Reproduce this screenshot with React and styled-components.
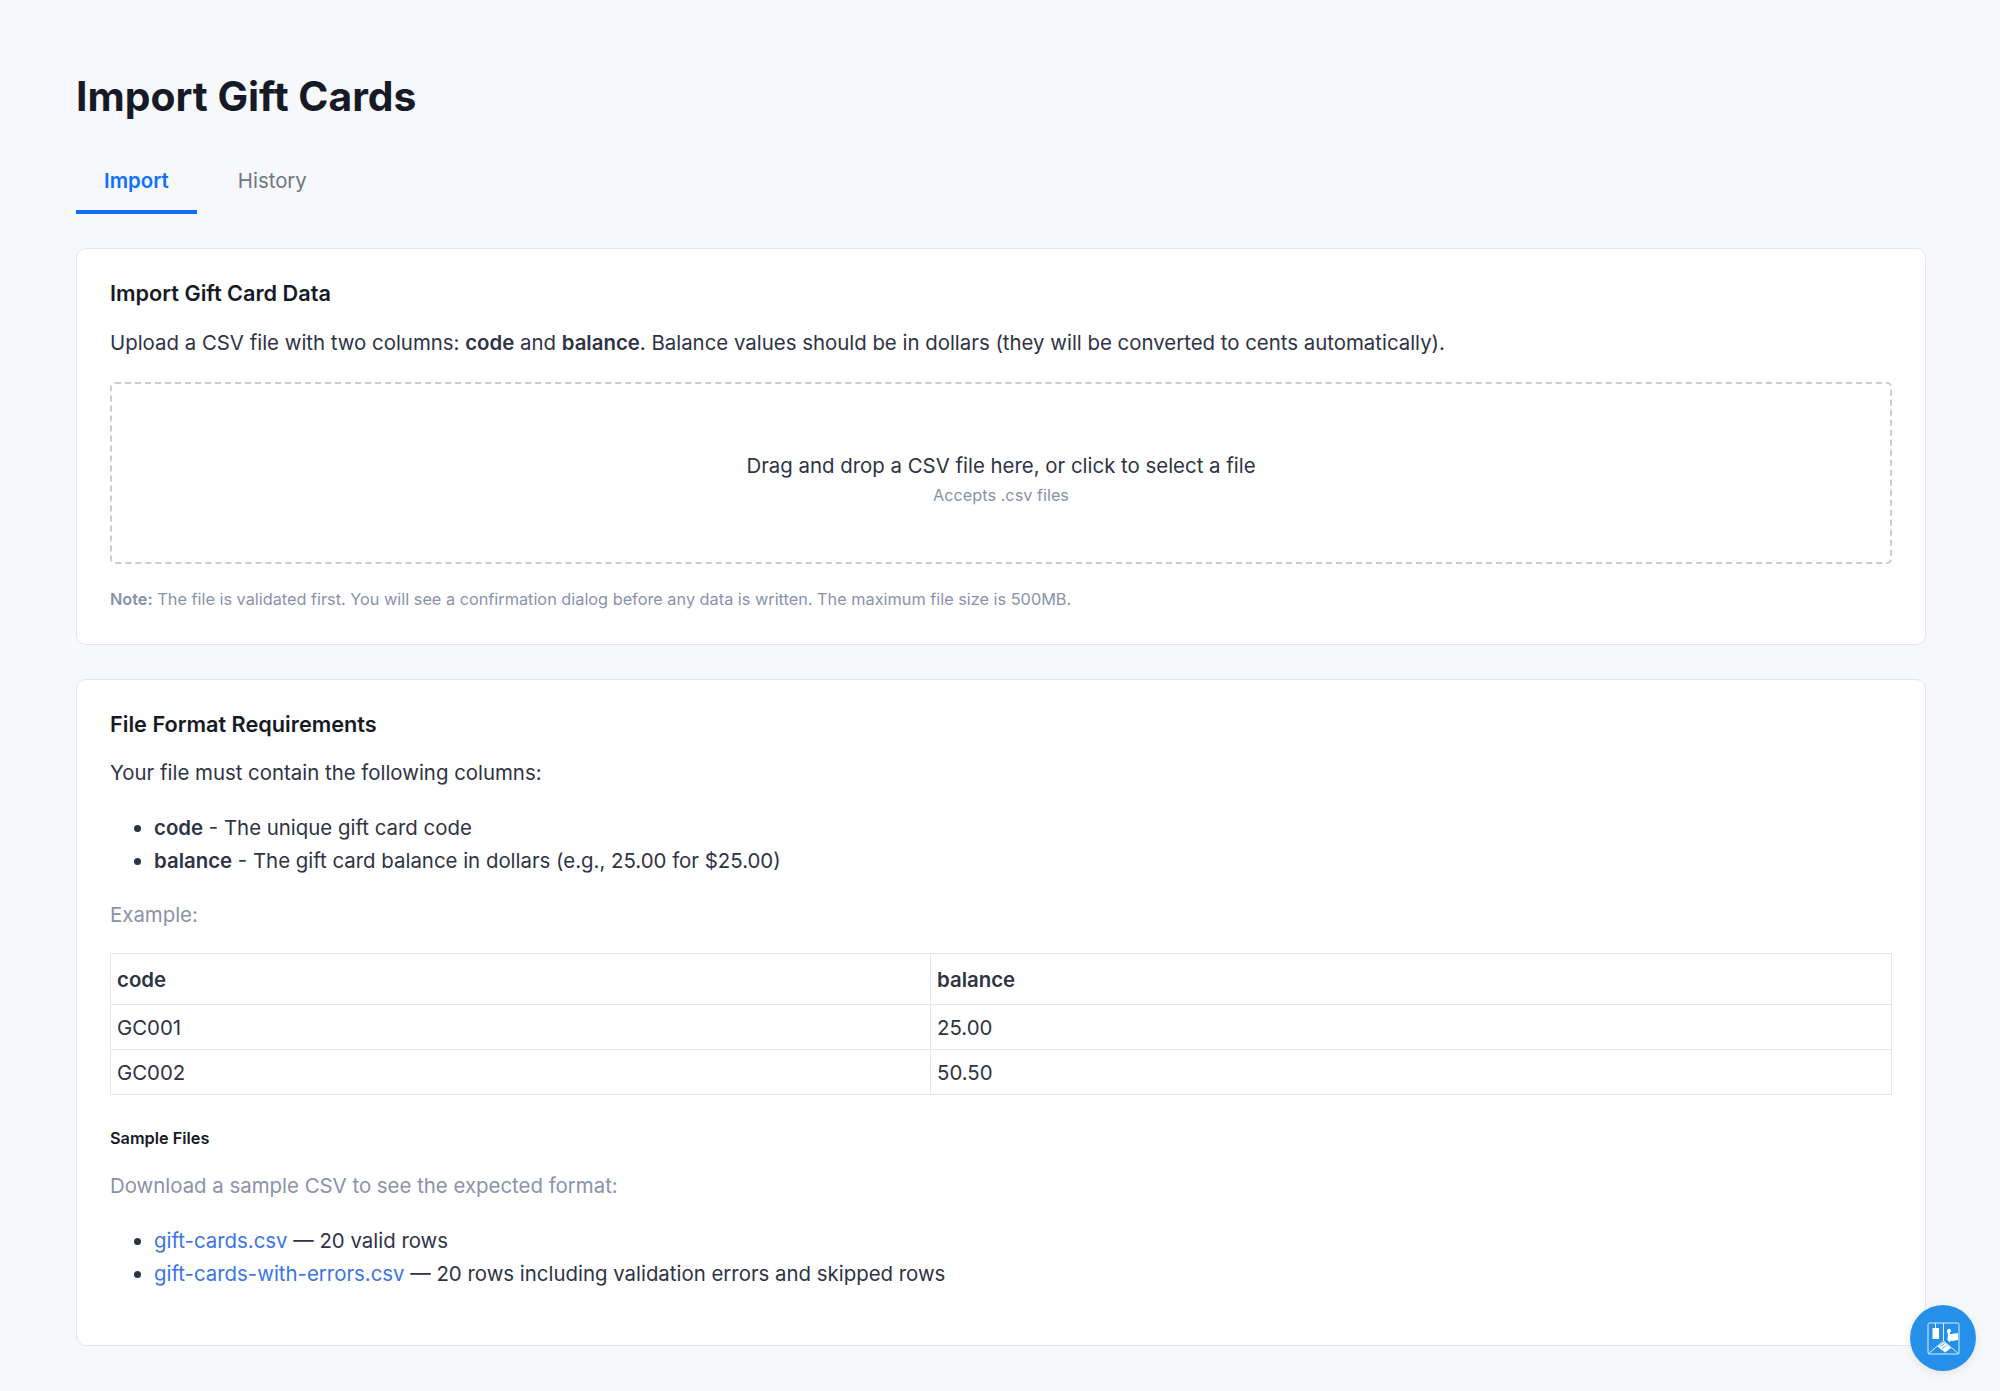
import React from 'react';
import styled, { createGlobalStyle } from 'styled-components';

const GlobalStyle = createGlobalStyle`
  html, body {
    margin: 0;
    padding: 0;
    background: #f6f8fb;
  }
  body {
    font-family: Inter, "Liberation Sans", sans-serif;
    color: #2e3345;
  }
`;

const App = () => {
  return (
    <Page>
      <GlobalStyle />
      <Title>Import Gift Cards</Title>
      <Tabs>
        <Tab $active>Import</Tab>
        <Tab>History</Tab>
      </Tabs>

      <Card>
        <CardTitle>Import Gift Card Data</CardTitle>
        <Text $mt={21}>
          Upload a CSV file with two columns: <b>code</b> and <b>balance</b>. Balance values should be in dollars (they will be converted to cents automatically).
        </Text>
        <DropZone>
          <DropText>Drag and drop a CSV file here, or click to select a file</DropText>
          <DropHint>Accepts .csv files</DropHint>
        </DropZone>
        <Note><b>Note:</b> The file is validated first. You will see a confirmation dialog before any data is written. The maximum file size is 500MB.</Note>
      </Card>

      <Card $last>
        <CardTitle>File Format Requirements</CardTitle>
        <Text $mt={20}>Your file must contain the following columns:</Text>
        <List>
          <li><b>code</b> - The unique gift card code</li>
          <li><b>balance</b> - The gift card balance in dollars (e.g., 25.00 for $25.00)</li>
        </List>
        <Text $mt={23} $muted>Example:</Text>
        <Table>
          <colgroup>
            <col width="820" />
            <col />
          </colgroup>
          <thead>
            <HeadRow>
              <th>code</th>
              <th>balance</th>
            </HeadRow>
          </thead>
          <tbody>
            <BodyRow>
              <td>GC001</td>
              <td>25.00</td>
            </BodyRow>
            <BodyRow>
              <td>GC002</td>
              <td>50.50</td>
            </BodyRow>
          </tbody>
        </Table>
        <SubTitle>Sample Files</SubTitle>
        <Text $mt={21} $muted>Download a sample CSV to see the expected format:</Text>
        <List>
          <li><FileLink href="#">gift-cards.csv</FileLink> — 20 valid rows</li>
          <li><FileLink href="#">gift-cards-with-errors.csv</FileLink> — 20 rows including validation errors and skipped rows</li>
        </List>
      </Card>

      <HelpButton aria-label="Help">
        <svg width="33" height="33" viewBox="0 0 33 33" fill="none">
          <rect x="1" y="1" width="31" height="31" rx="1.5" stroke="#fff" strokeOpacity="0.85" strokeWidth="1" />
          <path d="M1 32 L16.5 19 L32 32 M16.5 19 V1" stroke="#fff" strokeOpacity="0.85" strokeWidth="1" />
          <path d="M8.5 1.5 V6" stroke="#fff" strokeWidth="1" />
          <rect x="5.5" y="6" width="6.5" height="11" fill="#fff" />
          <path d="M20 9 a2 2 0 1 1 3 1.6 L22.6 12 H24 L31 11 V18 L25 19 L24 18.5 L22.5 20 L20.5 18 L21 13 Z" fill="#fff" />
          <path d="M10.5 24.5 L17 20 L24 26 L18 30.5 Z" fill="#fff" />
          <path d="M13 24.5 L17.5 21.5 M15 26.5 L19.5 23.5" stroke="#2590ea" strokeWidth="0.7" />
        </svg>
      </HelpButton>
    </Page>
  );
};

export default App;

const Page = styled.div`
  box-sizing: border-box;
  min-height: 1391px;
  padding: 72px 74px 0 76px;
`;

const Title = styled.h1`
  margin: 0;
  font-size: 40.8px;
  line-height: 48px;
  font-weight: 700;
  color: #161a26;
`;

const Tabs = styled.div`
  display: flex;
  gap: 13px;
  margin-top: 32px;
`;

const Tab = styled.div`
  padding: 0 28px;
  height: 58px;
  line-height: 58px;
  font-size: 20.4px;
  font-weight: ${p => (p.$active ? 600 : 400)};
  color: ${p => (p.$active ? '#0f6fff' : '#6f7683')};
  border-bottom: 4px solid ${p => (p.$active ? '#0f6fff' : 'transparent')};
`;

const Card = styled.section`
  box-sizing: border-box;
  margin-top: ${p => (p.$last ? 34 : 34)}px;
  padding: 30px 33px ${p => (p.$last ? 55 : 33)}px;
  background: #fff;
  border: 1px solid #e3e6ee;
  border-radius: 10px;
`;

const CardTitle = styled.h2`
  margin: 0;
  font-size: 21.7px;
  line-height: 28px;
  font-weight: 600;
  color: #161a26;
`;

const Text = styled.p`
  margin: ${p => p.$mt}px 0 0;
  font-size: 20.4px;
  line-height: 30px;
  color: ${p => (p.$muted ? '#8a92ab' : '#2e3345')};

  b {
    font-weight: 600;
  }
`;

const DropZone = styled.div`
  box-sizing: border-box;
  height: 182px;
  margin-top: 24px;
  padding-top: 67px;
  border: 2.5px dashed #cccccc;
  border-radius: 5px;
  text-align: center;
`;

const DropText = styled.div`
  font-size: 20.4px;
  line-height: 30px;
  color: #2e3345;
`;

const DropHint = styled.div`
  font-size: 16.3px;
  line-height: 24px;
  margin-top: 2px;
  color: #8a92ab;
`;

const Note = styled.p`
  margin: 23px 0 0;
  font-size: 16.3px;
  line-height: 24px;
  color: #8a92ab;

  b {
    font-weight: 600;
  }
`;

const List = styled.ul`
  margin: 23px 0 0;
  padding: 0 0 0 44px;
  font-size: 20.4px;
  line-height: 33px;
  color: #2e3345;

  b {
    font-weight: 600;
  }
`;

const Table = styled.table`
  width: 100%;
  margin-top: 23px;
  border-collapse: collapse;
  table-layout: fixed;
  font-size: 20.4px;
  color: #2e3345;

  th, td {
    padding: 0 6px;
    border: 1.3px solid #e4e7ee;
    text-align: left;
  }

  th {
    font-weight: 600;
  }
`;

const HeadRow = styled.tr`
  height: 51px;
`;

const BodyRow = styled.tr`
  height: 45px;
`;

const SubTitle = styled.h3`
  margin: 31px 0 0;
  font-size: 16.3px;
  line-height: 24px;
  font-weight: 600;
  color: #161a26;
`;

const FileLink = styled.a`
  color: #3b74e6;
  text-decoration: none;
`;

const HelpButton = styled.button`
  position: fixed;
  right: 24px;
  bottom: 20px;
  width: 66px;
  height: 66px;
  padding: 0;
  display: flex;
  align-items: center;
  justify-content: center;
  background: #2590ea;
  border: none;
  border-radius: 50%;
  box-shadow: 0 2px 10px rgba(40, 50, 80, 0.1);
`;
